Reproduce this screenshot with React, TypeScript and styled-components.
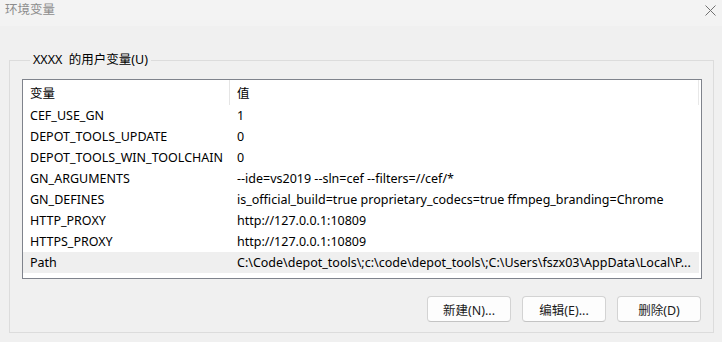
import React from 'react';
import styled, { createGlobalStyle } from 'styled-components';

const GlobalStyle = createGlobalStyle`
  html, body {
    margin: 0;
    padding: 0;
    background: #f0f0f0;
  }
  body {
    font-family: "Noto Sans", "Noto Sans CJK SC", sans-serif;
    font-size: 12.5px;
    color: #000;
  }
`;

// ======= Window chrome =======
const Window = styled.div`
  width: 722px;
  height: 342px;
  background: #f0f0f0;
  display: flex;
  flex-direction: column;
  overflow: hidden;
`;

const TitleBar = styled.div`
  height: 26px;
  flex-shrink: 0;
  background: #f3f3f3;
  display: flex;
  align-items: center;
  justify-content: space-between;
  padding: 0 6px 0 5px;
`;

const TitleText = styled.span`
  color: #8c8c8c;
  font-size: 12.5px;
  line-height: 16px;
  margin-top: -6px;
`;

const CloseButton = styled.div`
  width: 12px;
  height: 12px;
  display: flex;
  align-items: center;
  justify-content: center;
  margin-top: -5px;
`;

// ======= Group box =======
const Group = styled.fieldset`
  margin: 26px 8px 0 9px;
  padding: 0 11px 0 12px;
  border: 1px solid #dcdcdc;
  height: 281px;
  box-sizing: border-box;
  min-width: 0;
`;

const GroupLabel = styled.legend`
  padding: 0 3px;
  margin-left: 8px;
  line-height: 16px;
  font-size: 12.5px;
`;

// ======= List view =======
const ListBox = styled.div`
  margin-top: 11px;
  height: 200px;
  box-sizing: border-box;
  border: 1px solid #7f838c;
  background: #fff;
  display: flex;
  flex-direction: column;
`;

const HeaderRow = styled.div`
  height: 25px;
  display: grid;
  grid-template-columns: 207px 469px;
  align-items: stretch;
  flex-shrink: 0;
`;

const HeaderCell = styled.div<{ $last?: boolean }>`
  display: flex;
  align-items: center;
  padding-left: 7px;
  padding-bottom: 1px;
  border-right: 1px solid ${p => (p.$last ? '#e8e8e8' : '#e5e5e5')};
  height: 24px;
`;

const Row = styled.div<{ $selected?: boolean }>`
  height: 21px;
  width: 676px;
  display: grid;
  grid-template-columns: 207px 1fr;
  align-items: center;
  background: ${p => (p.$selected ? '#efefef' : 'transparent')};
`;

const Cell = styled.div`
  padding-left: 7px;
  white-space: nowrap;
  overflow: hidden;
  line-height: 16px;
`;

// ======= Buttons =======
const ButtonBar = styled.div`
  display: flex;
  justify-content: flex-end;
  gap: 11px;
  margin-top: 17px;
  margin-right: 1px;
`;

const Button = styled.button`
  width: 84px;
  height: 26px;
  box-sizing: border-box;
  border: 1px solid #d3d3d3;
  border-bottom-color: #c4c4c4;
  border-radius: 4px;
  background: #fdfdfd;
  font-family: "Noto Sans", "Noto Sans CJK SC", sans-serif;
  font-size: 12.5px;
  color: #1b1b1b;
  padding: 0;
  cursor: default;
`;

const variables = [
  { name: 'CEF_USE_GN', value: '1' },
  { name: 'DEPOT_TOOLS_UPDATE', value: '0' },
  { name: 'DEPOT_TOOLS_WIN_TOOLCHAIN', value: '0' },
  { name: 'GN_ARGUMENTS', value: '--ide=vs2019 --sln=cef --filters=//cef/*' },
  { name: 'GN_DEFINES', value: 'is_official_build=true proprietary_codecs=true ffmpeg_branding=Chrome' },
  { name: 'HTTP_PROXY', value: 'http://127.0.0.1:10809' },
  { name: 'HTTPS_PROXY', value: 'http://127.0.0.1:10809' },
  { name: 'Path', value: 'C:\\Code\\depot_tools\\;c:\\code\\depot_tools\\;C:\\Users\\fszx03\\AppData\\Local\\P...' },
];

const CloseIcon = () => (
  <svg width="11" height="11" viewBox="0 0 11 11">
    <path d="M0.5 0.5 L10.5 10.5 M10.5 0.5 L0.5 10.5" stroke="#707070" strokeWidth="1" />
  </svg>
);

const App: React.FC = () => {
  return (
    <Window>
      <GlobalStyle />
      <TitleBar>
        <TitleText>环境变量</TitleText>
        <CloseButton>
          <CloseIcon />
        </CloseButton>
      </TitleBar>

      <Group>
        <GroupLabel>XXXX&nbsp; 的用户变量(U)</GroupLabel>
        <ListBox>
          <HeaderRow>
            <HeaderCell>变量</HeaderCell>
            <HeaderCell $last>值</HeaderCell>
          </HeaderRow>
          {variables.map((v, i) => (
            <Row key={v.name} $selected={i === variables.length - 1}>
              <Cell>{v.name}</Cell>
              <Cell>{v.value}</Cell>
            </Row>
          ))}
        </ListBox>
        <ButtonBar>
          <Button>新建(N)...</Button>
          <Button>编辑(E)...</Button>
          <Button>删除(D)</Button>
        </ButtonBar>
      </Group>
    </Window>
  );
};

export default App;
